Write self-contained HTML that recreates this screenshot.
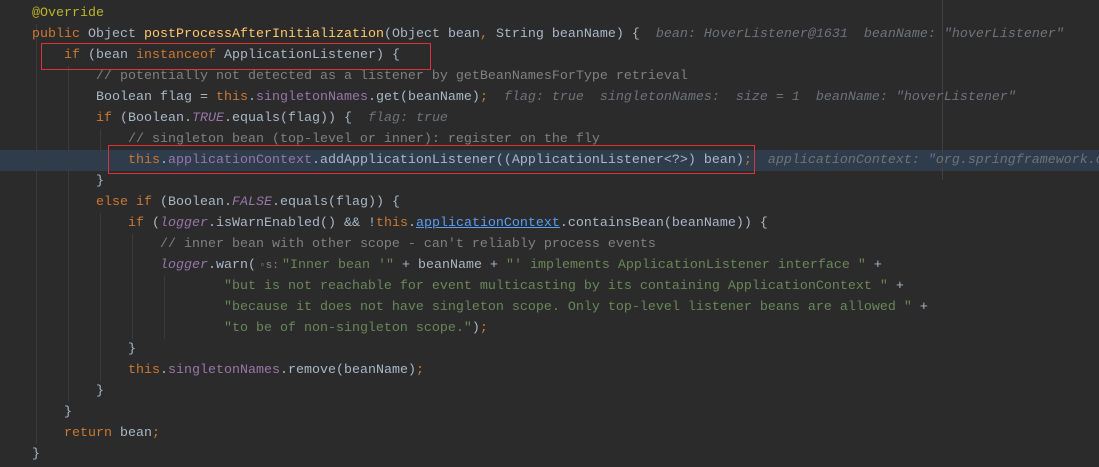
<!DOCTYPE html>
<html><head><meta charset="utf-8"><style>
body{margin:0;width:1099px;height:467px;background:#2b2b2b;overflow:hidden;position:relative;font-family:"Liberation Mono",monospace;font-size:13.33px;color:#a9b7c6}
.code{position:absolute;left:32px;top:3px;line-height:21px}
.l{height:21px;white-space:pre}
.k{color:#cc7832}.f{color:#9876aa}.c{color:#808080}.s{color:#6a8759}.a{color:#bbb529}
.i{font-style:italic}.h{color:#6f737a;font-style:italic}
.u{color:#589df6;text-decoration:underline}
.g{position:absolute;width:1px;background:#3b3b3b}
.hl{position:absolute;left:0;top:150px;width:1099px;height:21px;background:#2f3c4c}
.box{position:absolute;border:1.5px solid #e0303a}
.ph{display:inline-block;width:26px;color:#888;font-size:11px;text-align:center}
</style></head><body>
<div class="hl"></div>
<div class="g" style="left:36px;top:24px;height:420px"></div>
<div class="g" style="left:68px;top:66px;height:336px"></div>
<div class="g" style="left:100px;top:129px;height:42px"></div>
<div class="g" style="left:100px;top:213px;height:168px"></div>
<div class="g" style="left:132px;top:234px;height:105px"></div>
<div class="g" style="left:164px;top:276px;height:63px"></div>
<div class="g" style="left:942px;top:0;height:180px;background:#404040"></div>
<div class="code">
<div class="l"><span class="a">@Override</span></div>
<div class="l"><span class="k">public </span>Object <span style="color:#ffc66d">postProcessAfterInitialization</span>(Object bean<span class="k">, </span>String beanName) {  <span class="h">bean: HoverListener@1631  beanName: "hoverListener"</span></div>
<div class="l">    <span class="k">if </span>(bean <span class="k">instanceof </span>ApplicationListener) {</div>
<div class="l">        <span class="c">// potentially not detected as a listener by getBeanNamesForType retrieval</span></div>
<div class="l">        Boolean flag = <span class="k">this</span>.<span class="f">singletonNames</span>.get(beanName)<span class="k">;</span>  <span class="h">flag: true  singletonNames:  size = 1  beanName: "hoverListener"</span></div>
<div class="l">        <span class="k">if </span>(Boolean.<span class="f i">TRUE</span>.equals(flag)) {  <span class="h">flag: true</span></div>
<div class="l">            <span class="c">// singleton bean (top-level or inner): register on the fly</span></div>
<div class="l">            <span class="k">this</span>.<span class="f">applicationContext</span>.addApplicationListener((ApplicationListener&lt;?&gt;) bean)<span class="k">;</span>  <span class="h">applicationContext: "org.springframework.context</span></div>
<div class="l">        }</div>
<div class="l">        <span class="k">else if </span>(Boolean.<span class="f i">FALSE</span>.equals(flag)) {</div>
<div class="l">            <span class="k">if </span>(<span class="f i">logger</span>.isWarnEnabled() &amp;&amp; !<span class="k">this</span>.<span class="u">applicationContext</span>.containsBean(beanName)) {</div>
<div class="l">                <span class="c">// inner bean with other scope - can't reliably process events</span></div>
<div class="l">                <span class="f i">logger</span>.warn(<span class="ph">◦s:</span><span class="s">"Inner bean '"</span> + beanName + <span class="s">"' implements ApplicationListener interface "</span> +</div>
<div class="l">                        <span class="s">"but is not reachable for event multicasting by its containing ApplicationContext "</span> +</div>
<div class="l">                        <span class="s">"because it does not have singleton scope. Only top-level listener beans are allowed "</span> +</div>
<div class="l">                        <span class="s">"to be of non-singleton scope."</span>)<span class="k">;</span></div>
<div class="l">            }</div>
<div class="l">            <span class="k">this</span>.<span class="f">singletonNames</span>.remove(beanName)<span class="k">;</span></div>
<div class="l">        }</div>
<div class="l">    }</div>
<div class="l">    <span class="k">return </span>bean<span class="k">;</span></div>
<div class="l">}</div>
</div>
<div class="box" style="left:41px;top:43px;width:388px;height:25px"></div>
<div class="box" style="left:108px;top:145px;width:645px;height:27px"></div>
</body></html>
